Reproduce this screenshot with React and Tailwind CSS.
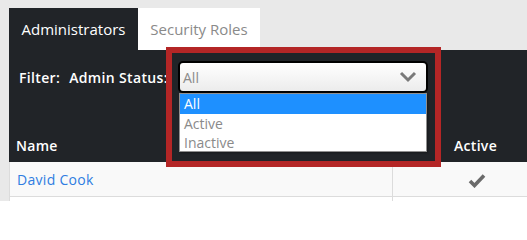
import React from "react";

export default function App() {
  const font = { fontFamily: '"Open Sans", "Noto Sans", Arial, sans-serif' };
  return (
    <div className="relative w-[527px] h-[201px] overflow-hidden bg-[#e9e9e9] pl-[9px] pt-[8px] text-[14px]" style={font}>
      {/* Tabs */}
      <div className="flex h-[42px]">
        <div className="w-[129px] bg-[#212428] text-white text-[15px] flex items-center justify-center pt-[1px]">Administrators</div>
        <div className="w-[122px] bg-white text-[#8a8a8a] text-[15px] flex items-center justify-center pt-[1px]">Security Roles</div>
      </div>
      {/* Dark panel */}
      <div className="w-[600px] h-[112px] bg-[#212428] flex flex-col">
        <div className="flex items-start pt-[11px] h-[78px]">
          <div className="w-[169px] flex text-white font-semibold mt-[6px] tracking-[0.35px]">
            <span className="ml-[10px]">Filter:</span>
            <span className="ml-[9px]">Admin Status:</span>
          </div>
          <div className="relative w-[250px] h-[32px] rounded-[5px] border-2 border-black bg-gradient-to-b from-white to-[#ececec] flex items-center justify-between pl-[3px] pr-[9px]">
            <span className="text-[#8a8a8a]">All</span>
            <svg width="18" height="12" viewBox="0 0 18 12">
              <path d="M2 2 L9 9 L16 2" fill="none" stroke="#7a7a7a" strokeWidth="3" />
            </svg>
            <div className="absolute left-[-1px] top-[30px] w-[248px] h-[59px] bg-white border border-[#8f8f8f] shadow-[1px_1px_2px_rgba(0,0,0,0.3)] flex flex-col z-10">
              <div className="h-[20px] bg-[#1e90ff] text-white pl-[4px] leading-[20px]">All</div>
              <div className="h-[19px] text-[#8a8a8a] pl-[4px] leading-[19px]">Active</div>
              <div className="h-[19px] text-[#8a8a8a] pl-[4px] leading-[19px]">Inactive</div>
            </div>
          </div>
        </div>
        <div className="flex flex-1 items-center text-white font-semibold tracking-[0.3px]">
          <div className="w-[383px] pl-[7px]">Name</div>
          <div className="pl-[62px]">Active</div>
        </div>
      </div>
      {/* Row */}
      <div className="w-[600px] h-[35px] bg-[#f9f9f9] border-l border-b border-[#dcdcdc] flex">
        <div className="w-[383px] border-r border-[#dcdcdc] flex items-center pl-[7px] pt-[1px] text-[#2f7de1] tracking-[0.3px]">David Cook</div>
        <div className="flex items-center pl-[75px] pt-[2px]">
          <svg width="18" height="15" viewBox="0 0 18 15">
            <path d="M2 8 L6.5 12.5 L16 2.5" fill="none" stroke="#6a6a6a" strokeWidth="3.6" />
          </svg>
        </div>
      </div>
      <div className="w-[600px] h-[10px] bg-white border-l border-[#dcdcdc] flex">
        <div className="w-[383px] border-r border-[#dcdcdc]"></div>
      </div>
      {/* Annotation red box */}
      <div className="absolute left-[166px] top-[47px] w-[275px] h-[120px] border-[6px] border-[#b42626] pointer-events-none"></div>
    </div>
  );
}
